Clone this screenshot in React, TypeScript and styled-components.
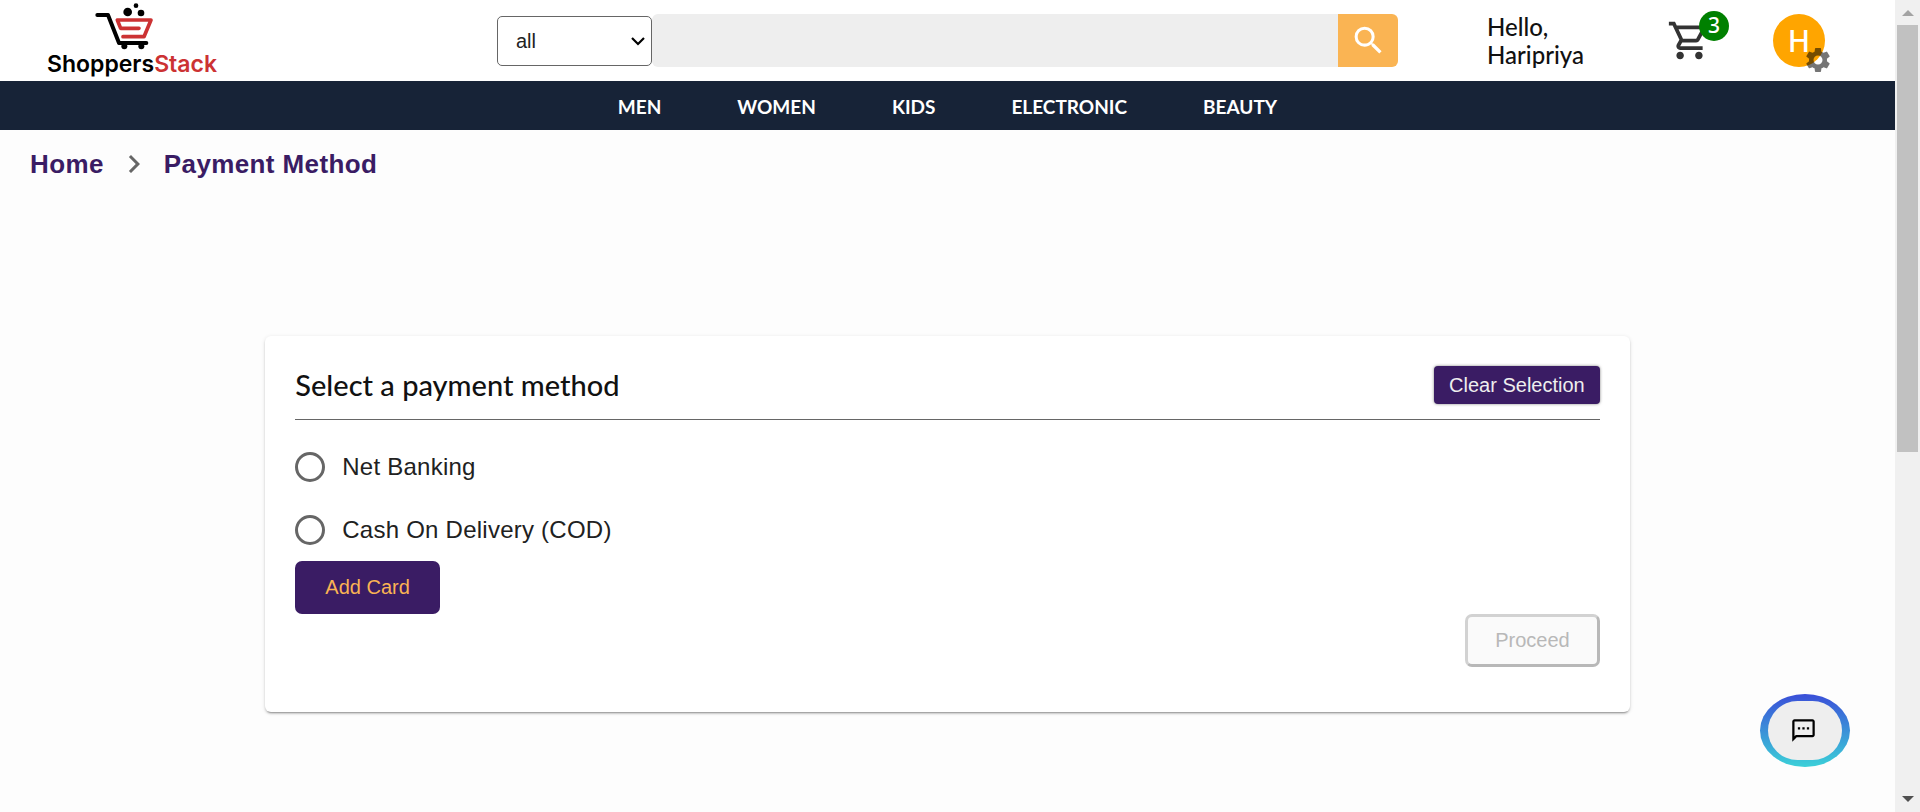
import React from 'react';
import styled, { createGlobalStyle } from 'styled-components';
import {
  MdNavigateNext,
  MdOutlineShoppingCart,
  MdOutlineSms,
  MdSearch,
  MdSettings,
} from 'react-icons/md';

const GlobalStyle = createGlobalStyle`
  *, *::before, *::after { box-sizing: border-box; }
  body {
    margin: 0;
    background: #fdfdfd;
    color: #212121;
    font-family: "Liberation Sans", Arial, sans-serif;
  }
  button, input, select { font: inherit; }
  button { cursor: pointer; }
  a { text-decoration: none; }
`;

const headingFont = '"Lato", "Noto Sans", sans-serif';

const Shell = styled.div`
  display: flex;
  height: 100vh;
`;

const Page = styled.div`
  position: relative;
  flex: 1;
  min-width: 0;
`;

const Header = styled.header`
  display: grid;
  grid-template-columns: 497fr 901fr 497fr;
  align-items: center;
  height: 81px;
  background: #fff;
`;

const Logo = styled.a`
  justify-self: start;
  display: flex;
  flex-direction: column;
  align-items: center;
  margin-left: 47px;
  padding-bottom: 3px;
  color: #000;
  font: 600 23px/26px "Inter", sans-serif;

  svg { display: block; margin-right: 16px; }
`;

const LogoAccent = styled.span`
  color: #cc3233;
`;

const SearchForm = styled.form`
  display: flex;
  align-items: center;
`;

const SelectWrap = styled.div`
  position: relative;
  width: 155px;

  svg {
    position: absolute;
    right: 7px;
    top: 20px;
    pointer-events: none;
  }
`;

const CategorySelect = styled.select`
  appearance: none;
  display: block;
  width: 100%;
  height: 50px;
  padding: 0 18px;
  border: 1px solid #666;
  border-radius: 5px;
  background: #fff;
  color: #222;
  font-size: 20px;
`;

const SearchInput = styled.input`
  flex: 1;
  min-width: 0;
  height: 53px;
  padding: 0 16px;
  border: 0;
  border-radius: 6px 0 0 6px;
  background: #eee;
  font-size: 20px;
`;

const SearchButton = styled.button`
  display: grid;
  place-items: center;
  width: 60px;
  height: 53px;
  padding: 0;
  border: 0;
  border-radius: 0 6px 6px 0;
  background: #fab453;
  color: #fff;
`;

const Account = styled.div`
  display: flex;
  align-items: center;
  padding-left: 89px;
`;

const Greeting = styled.p`
  width: 180px;
  margin: 0;
  color: #111;
  font: 500 24px/28px ${headingFont};
`;

const CartButton = styled.button`
  position: relative;
  display: block;
  margin-right: 61px;
  padding: 0;
  border: 0;
  background: none;
  color: #333;

  svg { display: block; }
`;

const Badge = styled.span`
  position: absolute;
  top: -7px;
  right: -17px;
  width: 30px;
  height: 30px;
  border-radius: 50%;
  background: green;
  color: #fff;
  font: 500 21px/28px "Noto Sans", sans-serif;
  text-align: center;
`;

const Avatar = styled.button`
  position: relative;
  width: 52px;
  height: 53px;
  padding: 0;
  border: 0;
  border-radius: 50%;
  background: orange;
  color: #fff;
  font: 500 30px/52px "Noto Sans", sans-serif;

  svg {
    position: absolute;
    right: -8px;
    bottom: -8px;
    color: rgba(0, 0, 0, 0.54);
  }
`;

const CategoryNav = styled.nav`
  display: flex;
  align-items: center;
  justify-content: center;
  gap: 76px;
  height: 49px;
  padding-top: 2px;
  background: #172337;
`;

const CategoryLink = styled.a`
  color: #fff;
  font: 700 19px/24px "Lato", sans-serif;
`;

const Breadcrumb = styled.nav`
  display: flex;
  align-items: center;
  gap: 12px;
  padding: 16px 30px 0;
  color: #666;
`;

const Crumb = styled.a`
  color: #3a1c64;
  font-size: 26px;
  font-weight: 700;
  line-height: 36px;
  letter-spacing: 0.015em;
`;

const Card = styled.main`
  width: 72%;
  margin: 154px auto 0;
  padding: 30px 30px 45px;
  border-radius: 6px;
  background: #fff;
  box-shadow:
    0 3px 1px -2px rgba(0, 0, 0, 0.2),
    0 2px 2px 0 rgba(0, 0, 0, 0.14),
    0 1px 4px 0 rgba(0, 0, 0, 0.12);
`;

const CardHeader = styled.div`
  display: flex;
  align-items: center;
  justify-content: space-between;
  margin-bottom: 15px;
  padding-bottom: 15px;
  border-bottom: 1px solid #666;
`;

const CardTitle = styled.h1`
  margin: 0;
  color: #111;
  font: 500 29px/38px ${headingFont};
`;

const ClearButton = styled.button`
  height: 38px;
  padding: 0 15px;
  border: 0;
  border-radius: 4px;
  background: #3a1c64;
  color: #eee;
  font-size: 20px;
  box-shadow: 0 0 3px rgba(0, 0, 0, 0.5);
`;

const Options = styled.fieldset`
  margin: 0;
  padding: 0;
  border: 0;
`;

const Option = styled.label`
  display: flex;
  align-items: center;
  gap: 17px;
  height: 63px;
  font-size: 24px;
  letter-spacing: 0.01em;
`;

const Radio = styled.input`
  appearance: none;
  width: 30px;
  height: 30px;
  margin: 0;
  border: 3px solid #666;
  border-radius: 50%;

  &:checked {
    border-color: #3a1c64;
    background: radial-gradient(#3a1c64 0 7px, transparent 8px);
  }
`;

const AddCardButton = styled.button`
  display: block;
  height: 53px;
  padding: 0 30px;
  border: 0;
  border-radius: 7px;
  background: #3a1c64;
  color: #fab453;
  font-size: 20px;
`;

const ProceedButton = styled.button`
  display: block;
  height: 53px;
  margin-left: auto;
  padding: 0 27px;
  border: 3px solid;
  border-color: #d2d2d2 #b8b8b8 #b8b8b8 #d2d2d2;
  border-radius: 7px;
  background: #fafafa;
  color: #b8b8b8;
  font-size: 20px;
`;

const ChatButton = styled.button`
  position: absolute;
  right: 45px;
  bottom: 45px;
  width: 90px;
  height: 73px;
  padding: 7px 8px;
  border: 0;
  border-radius: 50%;
  background: linear-gradient(#3a4fd8, #3bd0d8);
`;

const ChatFace = styled.span`
  display: grid;
  place-items: center;
  height: 100%;
  padding-right: 3px;
  border-radius: 32px;
  background: #eee;
  color: #000;
`;

const Scrollbar = styled.div`
  display: flex;
  flex-direction: column;
  align-items: center;
  justify-content: space-between;
  width: 25px;
  padding: 10px 2px;
  background: #f0f0f0;

  svg { display: block; }
`;

const ScrollTrack = styled.div`
  flex: 1;
  width: 21px;
  margin: 9px 0;
`;

const ScrollThumb = styled.div`
  height: 56%;
  background: #c1c1c1;
`;

const categories = ['MEN', 'WOMEN', 'KIDS', 'ELECTRONIC', 'BEAUTY'];
const methods = ['Net Banking', 'Cash On Delivery (COD)'];

function CartLogo() {
  return (
    <svg width="60" height="50" viewBox="192 5 180 150" fill="none" strokeLinecap="round" strokeLinejoin="round" aria-hidden="true">
      <g stroke="#000" strokeWidth="12">
        <path d="M202 47H234L267 131H349" />
      </g>
      <g stroke="#cc3233" strokeWidth="11">
        <path d="M327 87H272L262 62H363L342 112H279" />
      </g>
      <g fill="#000">
        <circle cx="293" cy="38" r="13" />
        <circle cx="318" cy="19" r="7" />
        <circle cx="333" cy="41" r="10" />
        <circle cx="283" cy="141" r="9" />
        <circle cx="334" cy="141" r="9" />
      </g>
    </svg>
  );
}

export default function App() {
  return (
    <>
      <GlobalStyle />
      <Shell>
        <Page>
          <Header>
            <Logo href="#">
              <CartLogo />
              <span>Shoppers<LogoAccent>Stack</LogoAccent></span>
            </Logo>
            <SearchForm>
              <SelectWrap>
                <CategorySelect aria-label="Category" defaultValue="all">
                  <option>all</option>
                </CategorySelect>
                <svg width="14" height="10" viewBox="0 0 14 10" fill="none" stroke="#000" strokeWidth="2.2" aria-hidden="true">
                  <path d="M1 2L7 8L13 2" />
                </svg>
              </SelectWrap>
              <SearchInput type="text" aria-label="Search products" />
              <SearchButton type="button" aria-label="Search">
                <MdSearch size={37} />
              </SearchButton>
            </SearchForm>
            <Account>
              <Greeting>Hello,<br />Haripriya</Greeting>
              <CartButton type="button" aria-label="Cart">
                <MdOutlineShoppingCart size={45} />
                <Badge>3</Badge>
              </CartButton>
              <Avatar type="button" aria-label="Account settings">
                H
                <MdSettings size={30} />
              </Avatar>
            </Account>
          </Header>
          <CategoryNav>
            {categories.map((name) => (
              <CategoryLink href="#" key={name}>{name}</CategoryLink>
            ))}
          </CategoryNav>
          <Breadcrumb aria-label="Breadcrumb">
            <Crumb href="#">Home</Crumb>
            <MdNavigateNext size={36} />
            <Crumb href="#">Payment Method</Crumb>
          </Breadcrumb>
          <Card>
            <CardHeader>
              <CardTitle>Select a payment method</CardTitle>
              <ClearButton type="button">Clear Selection</ClearButton>
            </CardHeader>
            <Options aria-label="Payment method">
              {methods.map((name) => (
                <Option key={name}>
                  <Radio type="radio" name="method" />
                  {name}
                </Option>
              ))}
            </Options>
            <AddCardButton type="button">Add Card</AddCardButton>
            <ProceedButton type="button" disabled>Proceed</ProceedButton>
          </Card>
          <ChatButton type="button" aria-label="Open chat">
            <ChatFace>
              <MdOutlineSms size={27} />
            </ChatFace>
          </ChatButton>
        </Page>
        <Scrollbar aria-hidden="true">
          <svg width="12" height="6" viewBox="0 0 12 6" fill="#a3a3a3"><path d="M0 6L6 0L12 6Z" /></svg>
          <ScrollTrack>
            <ScrollThumb />
          </ScrollTrack>
          <svg width="12" height="6" viewBox="0 0 12 6" fill="#505050"><path d="M0 0L6 6L12 0Z" /></svg>
        </Scrollbar>
      </Shell>
    </>
  );
}
